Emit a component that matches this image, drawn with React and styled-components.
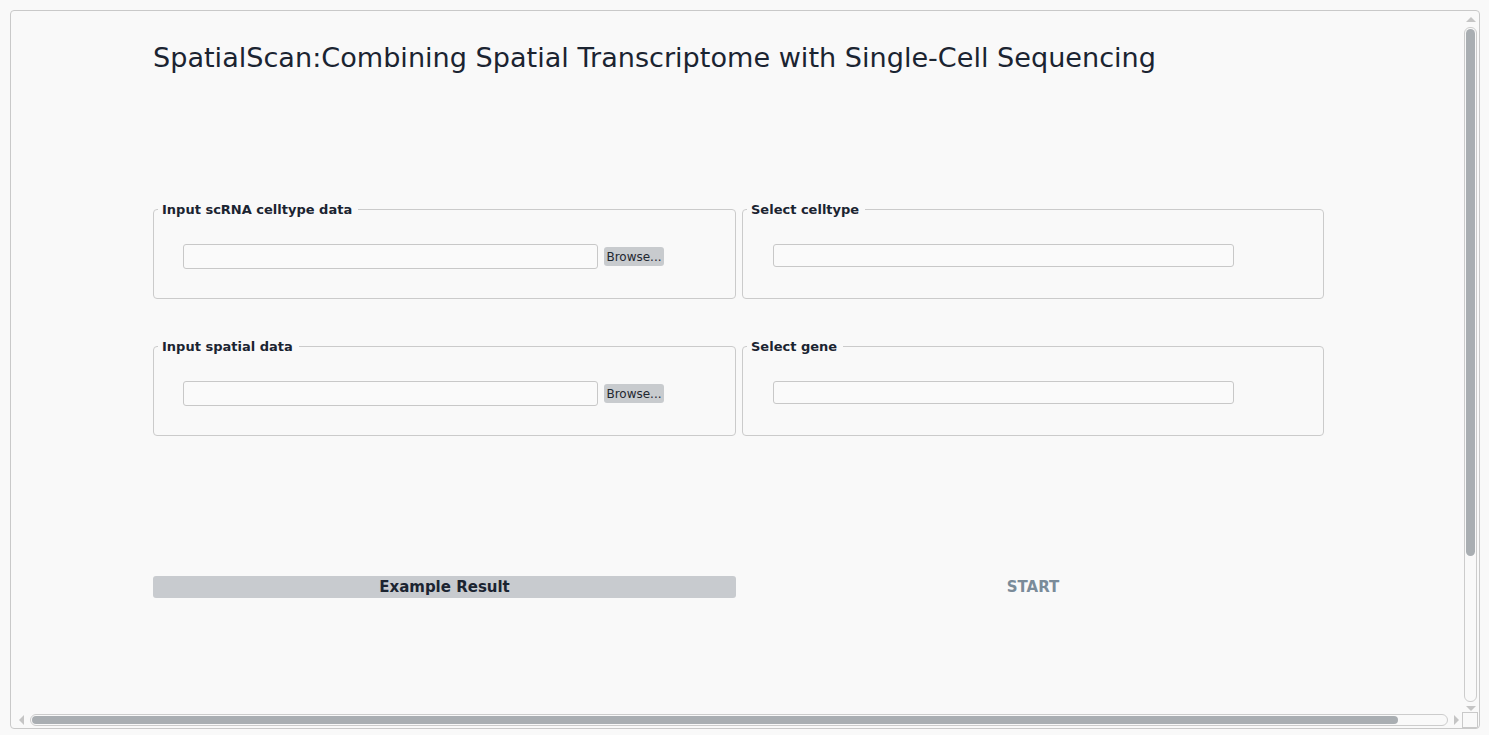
import React from 'react';
import styled, { createGlobalStyle } from 'styled-components';

const GlobalStyle = createGlobalStyle`
  html, body {
    margin: 0;
    padding: 0;
    background: #f9f9f9;
    font-family: "DejaVu Sans", "Liberation Sans", sans-serif;
    color: #1b2431;
  }
`;

const Window = styled.div`
  margin: 10px 9px 6px 10px;
  height: 717px;
  border: 1px solid #c9c9c9;
  border-radius: 4px;
  background: #f9f9f9;
  display: flex;
  flex-direction: column;
  overflow: hidden;
`;

const Body = styled.div`
  flex: 1;
  display: flex;
  min-height: 0;
`;

const Viewport = styled.div`
  flex: 1;
  padding: 31px 0 0 142px;
`;

const Title = styled.h1`
  margin: 0 0 129px;
  padding-top: 1px;
  font-size: 27.1px;
  font-weight: normal;
  line-height: 30px;
  color: #1b2431;
`;

const Grid = styled.div`
  display: grid;
  grid-template-columns: 583px 582px;
  column-gap: 6px;
  row-gap: ${(p) => p.$rowGap || 0}px;
  margin-bottom: ${(p) => p.$bottom || 0}px;
`;

const Field = styled.fieldset`
  margin: 0;
  padding: 0;
  border: 1px solid #cbcbcb;
  border-radius: 4px;
  min-width: 0;
`;

const Legend = styled.legend`
  margin-left: 4px;
  padding: 0 6px 0 4px;
  font-size: 13px;
  font-weight: bold;
  line-height: 15px;
  color: #1b2431;
`;

const FieldRow = styled.div`
  display: flex;
  align-items: flex-start;
  gap: 6px;
  padding: 27px 0 29px ${(p) => p.$indent}px;
`;

const TextBox = styled.div`
  width: ${(p) => p.$width}px;
  height: ${(p) => p.$height}px;
  box-sizing: border-box;
  border: 1px solid #c8c8c8;
  border-radius: 3px;
  background: #fafafa;
`;

const Browse = styled.button`
  height: 19px;
  width: 60px;
  margin-top: 3px;
  padding: 0;
  border: none;
  border-radius: 3px;
  background: #c8cbce;
  font-family: "DejaVu Sans", sans-serif;
  font-size: 12px;
  color: #1f2730;
`;

const ActionButton = styled.button`
  height: 22px;
  padding: 0;
  border: none;
  border-radius: 3px;
  background: ${(p) => (p.$filled ? '#c8cbcf' : 'transparent')};
  font-family: "DejaVu Sans", sans-serif;
  font-size: 15px;
  font-weight: bold;
  color: ${(p) => (p.$filled ? '#1b2431' : '#7a8b99')};
`;

const VBar = styled.div`
  width: 17px;
  display: flex;
  flex-direction: column;
  align-items: center;
  padding: 6px 0 0;
`;

const Arrow = styled.div`
  width: 0;
  height: 0;
  border-style: solid;
  border-color: transparent;
  ${(p) => p.$dir === 'up' && `border-width: 0 5px 5px; border-bottom-color: #c5c5c5;`}
  ${(p) => p.$dir === 'down' && `border-width: 5px 5px 0; border-top-color: #c5c5c5;`}
  ${(p) => p.$dir === 'left' && `border-width: 5px 5px 5px 0; border-right-color: #c5c5c5;`}
  ${(p) => p.$dir === 'right' && `border-width: 5px 0 5px 5px; border-left-color: #c5c5c5;`}
`;

const VTrack = styled.div`
  flex: 1;
  width: 13px;
  box-sizing: border-box;
  margin: 5px 0 4px;
  border: 1px solid #cccccc;
  border-radius: 6px;
  padding: 1px;
`;

const VThumb = styled.div`
  height: 527px;
  border-radius: 5px;
  background: #a9aeb2;
`;

const HRow = styled.div`
  height: 17px;
  display: flex;
  align-items: center;
  padding-left: 8px;
`;

const HTrack = styled.div`
  width: 1418px;
  height: 12px;
  box-sizing: border-box;
  margin: 0 6px;
  border: 1px solid #cccccc;
  border-radius: 6px;
  padding: 1px;
`;

const HThumb = styled.div`
  width: 1366px;
  height: 8px;
  border-radius: 4px;
  background: #a9aeb2;
`;

const Corner = styled.div`
  width: 16px;
  height: 16px;
  box-sizing: border-box;
  margin-left: 3px;
  border: 1px solid #c9c9c9;
`;

const App = () => {
  return (
    <>
      <GlobalStyle />
      <Window>
        <Body>
          <Viewport>
            <Title>SpatialScan:Combining Spatial Transcriptome with Single-Cell Sequencing</Title>
            <Grid $rowGap={40} $bottom={140}>
              <Field>
                <Legend>Input scRNA celltype data</Legend>
                <FieldRow $indent={29}>
                  <TextBox $width={415} $height={25} />
                  <Browse>Browse...</Browse>
                </FieldRow>
              </Field>
              <Field>
                <Legend>Select celltype</Legend>
                <FieldRow $indent={30}>
                  <TextBox $width={461} $height={23} />
                </FieldRow>
              </Field>
              <Field>
                <Legend>Input spatial data</Legend>
                <FieldRow $indent={29}>
                  <TextBox $width={415} $height={25} />
                  <Browse>Browse...</Browse>
                </FieldRow>
              </Field>
              <Field>
                <Legend>Select gene</Legend>
                <FieldRow $indent={30}>
                  <TextBox $width={461} $height={23} />
                </FieldRow>
              </Field>
            </Grid>
            <Grid>
              <ActionButton $filled>Example Result</ActionButton>
              <ActionButton>START</ActionButton>
            </Grid>
          </Viewport>
          <VBar>
            <Arrow $dir="up" />
            <VTrack>
              <VThumb />
            </VTrack>
            <Arrow $dir="down" />
          </VBar>
        </Body>
        <HRow>
          <Arrow $dir="left" />
          <HTrack>
            <HThumb />
          </HTrack>
          <Arrow $dir="right" />
          <Corner />
        </HRow>
      </Window>
    </>
  );
};

export default App;
